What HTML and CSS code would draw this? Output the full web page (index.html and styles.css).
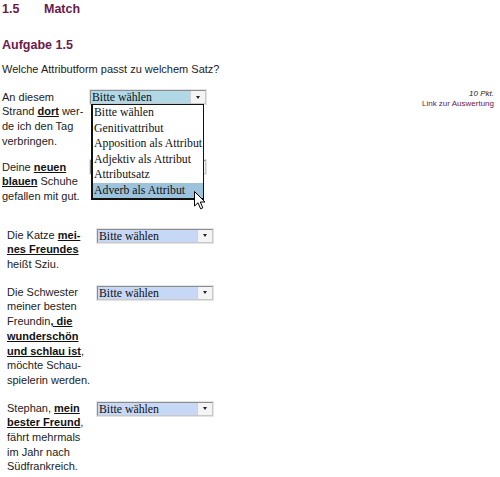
FILE: index.html
```html
<!DOCTYPE html>
<html lang="de">
<head>
<meta charset="utf-8">
<title>1.5 Match</title>
<link rel="stylesheet" href="styles.css">
</head>
<body>
<div class="page">
  <h1 class="sec"><span class="sec-num">1.5</span><span>Match</span></h1>
  <h2 class="task">Aufgabe 1.5</h2>
  <p class="intro">Welche Attributform passt zu welchem Satz?</p>

  <div class="main">
    <div class="exercises">
      <div class="group group-a">
        <div class="row">
          <div class="txt">An diesem<br>Strand <b>dort</b> wer-<br>de ich den Tag<br>verbringen.</div>
          <div class="sel-wrap">
            <div class="sel open"><span class="sel-text">Bitte wählen</span><span class="sel-btn"><span class="tri"></span></span></div>
            <ul class="list">
              <li>Bitte wählen</li>
              <li>Genitivattribut</li>
              <li>Apposition als Attribut</li>
              <li>Adjektiv als Attribut</li>
              <li>Attributsatz</li>
              <li class="hl">Adverb als Attribut</li>
              <svg class="cursor" width="12" height="19" viewBox="0 0 12 19"><path d="M0.5 0.5 L0.5 15 L4 11.8 L6.6 17.8 L8.8 16.8 L6.3 11 L11 11 Z" fill="#fff" stroke="#000" stroke-width="1" stroke-linejoin="miter"/></svg>
            </ul>
          </div>
        </div>
        <div class="row">
          <div class="txt">Deine <b>neuen</b><br><b>blauen</b> Schuhe<br>gefallen mit gut.</div>
          <div class="sel-wrap">
            <div class="sel"><span class="sel-text">Bitte wählen</span><span class="sel-btn"><span class="tri"></span></span></div>
          </div>
        </div>
      </div>

      <div class="group group-b">
        <div class="row">
          <div class="txt">Die Katze <b>mei-</b><br><b>nes Freundes</b><br>heißt Sziu.</div>
          <div class="sel-wrap">
            <div class="sel"><span class="sel-text">Bitte wählen</span><span class="sel-btn"><span class="tri"></span></span></div>
          </div>
        </div>
        <div class="row">
          <div class="txt">Die Schwester<br>meiner besten<br>Freundin<b>, die</b><br><b>wunderschön</b><br><b>und schlau ist</b>,<br>möchte Schau-<br>spielerin werden.</div>
          <div class="sel-wrap">
            <div class="sel"><span class="sel-text">Bitte wählen</span><span class="sel-btn"><span class="tri"></span></span></div>
          </div>
        </div>
        <div class="row">
          <div class="txt">Stephan, <b>mein</b><br><b>bester Freund</b>,<br>fährt mehrmals<br>im Jahr nach<br>Südfrankreich.</div>
          <div class="sel-wrap">
            <div class="sel"><span class="sel-text">Bitte wählen</span><span class="sel-btn"><span class="tri"></span></span></div>
          </div>
        </div>
      </div>
    </div>

    <aside class="score">
      <div class="pts">10 Pkt.</div>
      <a class="eval" href="#">Link zur Auswertung</a>
    </aside>
  </div>
</div>
</body>
</html>
```
FILE: styles.css
```css
html, body {
  margin: 0;
  padding: 0;
  background: #fff;
}
body {
  font-family: "Liberation Sans", Arial, sans-serif;
  font-size: 11px;
  color: #222;
}
.page {
  padding: 2px 6px 0 2px;
}
.sec {
  margin: 0;
  display: flex;
  font-size: 12.5px;
  line-height: 15px;
  font-weight: bold;
  color: #6b1a4c;
}
.sec-num {
  width: 42px;
}
.task {
  margin: 21px 0 0;
  font-size: 12.5px;
  line-height: 15px;
  font-weight: bold;
  color: #6b1a4c;
}
.intro {
  margin: 9px 0 0;
  line-height: 14.7px;
}
.main {
  display: flex;
  align-items: flex-start;
  margin-top: 13px;
}
.exercises {
  flex: 1;
}
.group {
  display: flex;
  flex-direction: column;
}
.group-a {
  gap: 11px;
}
.group-b {
  gap: 13px;
  margin-top: 24px;
  padding-left: 5px;
}
.row {
  display: flex;
  align-items: flex-start;
}
.txt {
  width: 86px;
  line-height: 14.7px;
  white-space: nowrap;
}
.txt b {
  text-decoration: underline;
  color: #111;
}
.group-a .txt {
  margin-right: 2px;
}
.group-b .txt {
  margin-right: 4px;
}
.sel-wrap {
  position: relative;
  padding-top: 0.5px;
}
.group-b .sel-wrap {
  padding-top: 1px;
}
.sel {
  box-sizing: border-box;
  width: 116px;
  height: 14px;
  display: flex;
  border: 1px solid #8c8c8c;
  border-right-color: #c8c8c8;
  border-bottom-color: #c8c8c8;
  box-shadow: 0 0 0 1px #e4e4e4;
  background: #c6d8f6;
  font-family: "Liberation Serif", "Times New Roman", serif;
  font-size: 11.8px;
  line-height: 12px;
  color: #111;
}
.sel.open {
  background: #b0d8e6;
}
.sel-text {
  flex: 1;
  padding-left: 1px;
  white-space: nowrap;
  overflow: hidden;
}
.sel-btn {
  width: 14px;
  background: #f4f4f4;
  border-left: 1px solid #d0d0d0;
  display: flex;
  align-items: center;
  justify-content: center;
}
.tri {
  width: 0;
  height: 0;
  border-left: 2.5px solid transparent;
  border-right: 2.5px solid transparent;
  border-top: 3px solid #222;
}
.list {
  position: absolute;
  top: 14.5px;
  left: 1px;
  z-index: 5;
  box-sizing: border-box;
  width: 113px;
  margin: 0;
  padding: 0;
  list-style: none;
  background: #fff;
  border: 1px solid #111;
  border-left-width: 2px;
  border-bottom-width: 2px;
  font-family: "Liberation Serif", "Times New Roman", serif;
  font-size: 11.8px;
  color: #111;
}
.list li {
  height: 15.5px;
  line-height: 15.5px;
  padding-left: 1px;
  white-space: nowrap;
}
.list li.hl {
  background: #9dc3dc;
}
.cursor {
  position: absolute;
  left: 101px;
  top: 86px;
}
.score {
  margin-top: -1px;
  text-align: right;
  font-size: 8px;
  line-height: 10px;
}
.pts {
  font-style: italic;
  color: #222;
}
.eval {
  color: #6b1a4c;
  text-decoration: none;
}
```
